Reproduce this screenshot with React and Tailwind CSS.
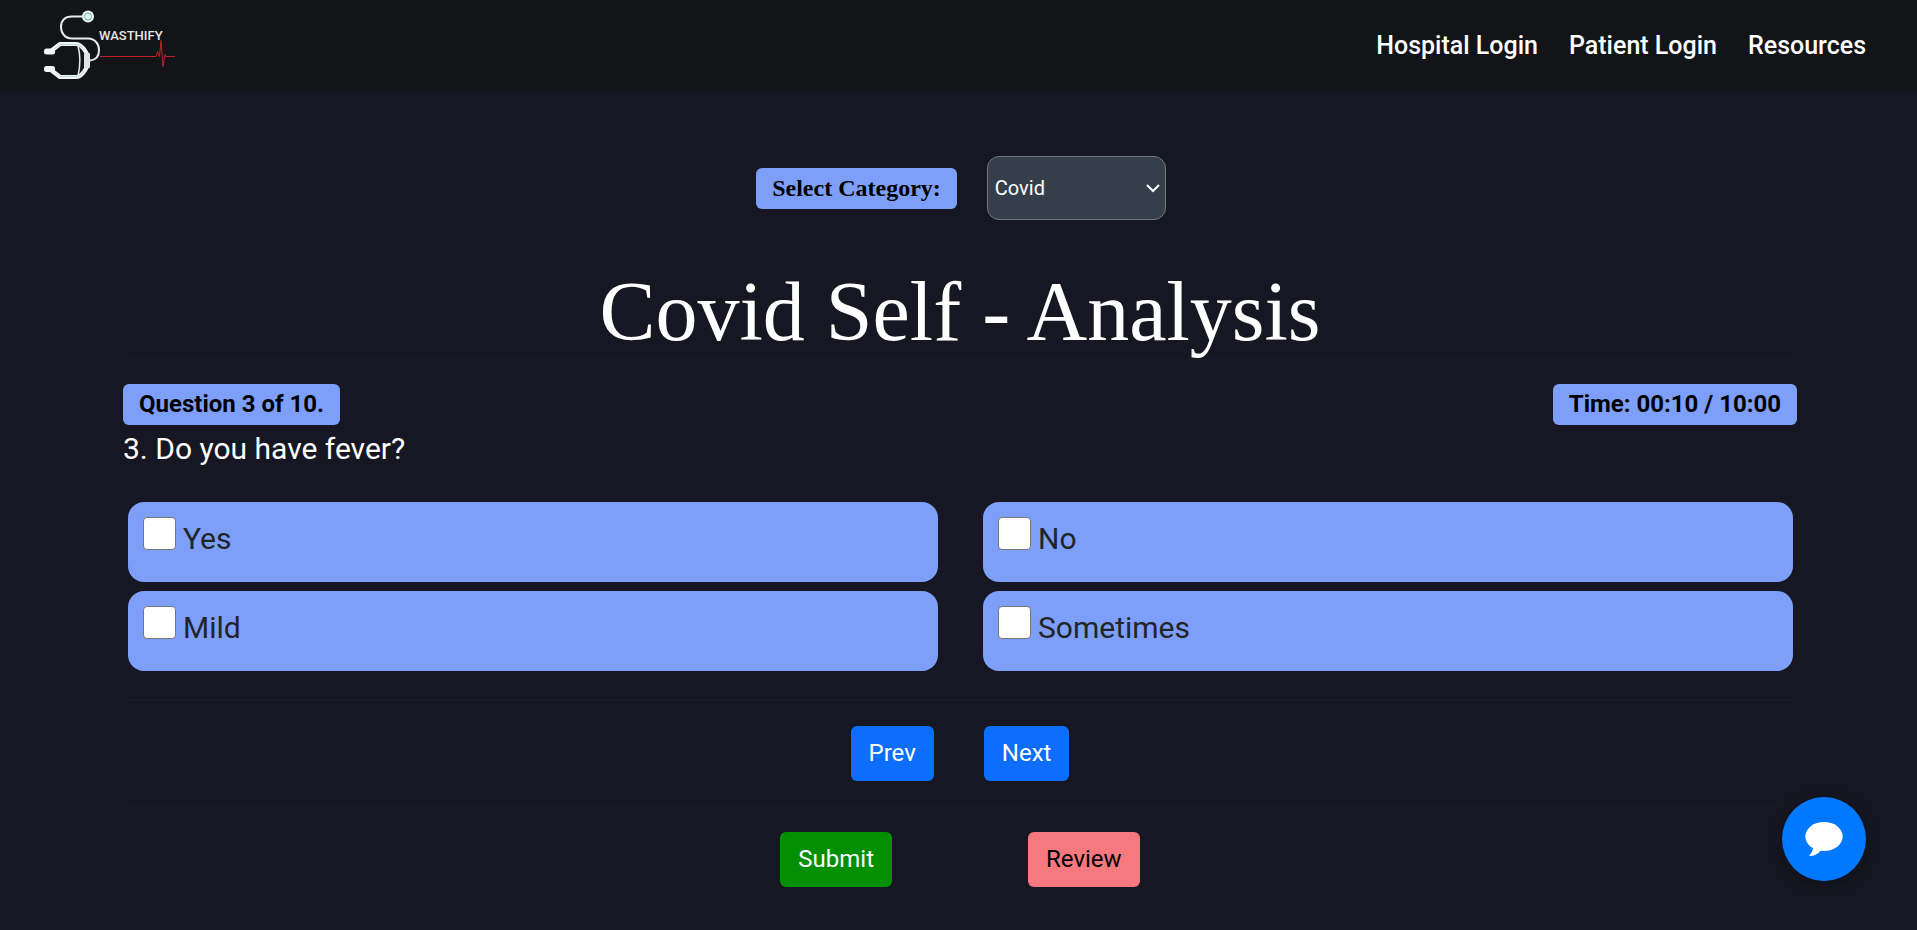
const navLinks = ["Hospital Login", "Patient Login", "Resources"];
const options = ["Yes", "No", "Mild", "Sometimes"];

function Logo() {
  return (
    <svg viewBox="0 0 160 91" className="h-[91px] w-40" role="img" aria-label="Swasthify">
      <g fill="none" stroke="#e8eaec" strokeWidth="2">
        <path d="M53 16.500H42C34.500 16.500 31 21 31 27c0 6 4 11.500 11 11.500h16c7 0 11 5.500 11 11.500 0 6-3 10-9 10.500" />
        <path d="M48 46c2.500 9 2.500 19 0 30" strokeWidth="1.500" />
        <path d="M18 51h3l9-7h16c5 0 12 8 12 16.500S51 77 46 77H30l-9-7h-3" stroke="#f2f4f5" strokeWidth="4.200" strokeLinejoin="round" />
        <path d="M23 50l7.500-5.500H46c3 0 6 2.500 8 6M30.500 76.500H46c3 0 6-2.500 8-6" stroke="#b5ddd5" strokeWidth="1" />
      </g>
      <rect x="14" y="48.500" width="11" height="6" rx="2.500" fill="#f2f4f5" />
      <rect x="14" y="66" width="11" height="6" rx="2.500" fill="#f2f4f5" />
      <rect x="54" y="52.500" width="6" height="16" rx="2" fill="#dfe1e4" />
      <circle cx="58" cy="16.500" r="6" fill="#f4f6f6" />
      <circle cx="58" cy="16.500" r="3.500" fill="#e4f4f1" stroke="#8ccfc0" strokeWidth="1.400" />
      <text x="69" y="40" fill="#e6e6e8" fontFamily="Roboto, sans-serif" fontSize="13" fontWeight="500">WASTHIFY</text>
      <path d="M70 56.500h56l1.500-5 2 5 1.500-16 2 26 2-12 1 2h9" fill="none" stroke="#c3202a" strokeWidth="1" />
    </svg>
  );
}

export default function App() {
  return (
    <div className="min-h-screen bg-[#171723] font-[Roboto,sans-serif] text-white">
      <header className="flex h-[91px] items-center justify-between bg-[#131417] pr-[51px] pl-[30px]">
        <a href="#home"><Logo /></a>
        <nav className="flex gap-[31px] text-[25px] font-medium">
          {navLinks.map((l) => (
            <a key={l} href="#nav">{l}</a>
          ))}
        </nav>
      </header>

      <main className="pr-[120px] pl-[123px]">
        <div className="flex items-center justify-center gap-[30px] pt-[65px] pl-0.5">
          <label htmlFor="category" className="rounded-md bg-[#7d9ffa] px-4 py-1 font-['Liberation_Serif',serif] text-2xl leading-[33px] font-bold text-black">
            Select Category:
          </label>
          <div className="grid items-center">
            <select id="category" defaultValue="Covid" className="col-start-1 row-start-1 h-16 w-[179px] appearance-none rounded-xl border border-[#73797e] bg-[#343f4b] px-[7px] text-xl">
              <option>Covid</option>
              <option>Diabetes</option>
            </select>
            <svg viewBox="0 0 14 9" className="pointer-events-none col-start-1 row-start-1 mr-[6px] h-[9px] w-[14px] justify-self-end" fill="none" stroke="#fff" strokeWidth="2">
              <path d="M1 1l6 6 6-6" />
            </svg>
          </div>
        </div>

        <h1 className="pt-11 text-center font-['Liberation_Serif',serif] text-[84px] leading-[95px]">Covid Self - Analysis</h1>
        <hr className="mx-1 border-[#1b1b26]" />

        <div className="mt-6 flex items-start justify-between text-2xl leading-[33px] font-bold text-black">
          <span className="rounded-md bg-[#7d9ffa] px-4 py-1">Question 3 of 10.</span>
          <span className="rounded-md bg-[#7d9ffa] px-4 py-1">Time: 00:10 / 10:00</span>
        </div>
        <h2 className="text-3xl leading-[48px]">3. Do you have fever?</h2>

        <div className="mr-1 ml-[5px] mt-[29px] grid grid-cols-2 gap-x-[45px] gap-y-[9px]">
          {options.map((o) => (
            <label key={o} className="flex h-20 items-start gap-[7px] rounded-2xl bg-[#7d9ffa] px-[15px] pt-[15px] text-3xl text-[#212529]">
              <input type="checkbox" className="h-[33px] w-[33px] appearance-none rounded-[4px] border border-[#767676] bg-white" />
              <span className="pt-1">{o}</span>
            </label>
          ))}
        </div>

        <hr className="mx-1 mt-7 border-t-2 border-[#1b1b26]" />
        <div className="flex justify-center gap-[50px] py-[25px] text-2xl leading-9">
          <button className="rounded-md bg-[#0d6efd] px-[18px] pt-[9px] pb-[10px]">Prev</button>
          <button className="rounded-md bg-[#0d6efd] px-[18px] pt-[9px] pb-[10px]">Next</button>
        </div>
        <hr className="mx-1 border-[#1b1b26]" />
        <div className="flex justify-center gap-[136px] py-[25px] text-2xl leading-9">
          <button className="rounded-md bg-[#028f02] px-[18px] pt-[9px] pb-[10px]">Submit</button>
          <button className="rounded-md bg-[#f5797f] px-[18px] pt-[9px] pb-[10px] text-black">Review</button>
        </div>
      </main>

      <button aria-label="Open chat" className="fixed right-[51px] bottom-[49px] flex size-[84px] items-center justify-center rounded-full bg-[#0078ff] shadow-[0_2px_12px_4px_rgba(0,0,0,0.2)]">
        <svg viewBox="0 0 38 34" className="h-[34px] w-[38px]" fill="#fff">
          <ellipse cx="19" cy="14.500" rx="18.700" ry="14.500" />
          <path d="M8 25c0 4-1.500 6-3.500 8-.4.500 0 1 .6 1C9.500 34 13 32 16 28.500z" />
        </svg>
      </button>
    </div>
  );
}
